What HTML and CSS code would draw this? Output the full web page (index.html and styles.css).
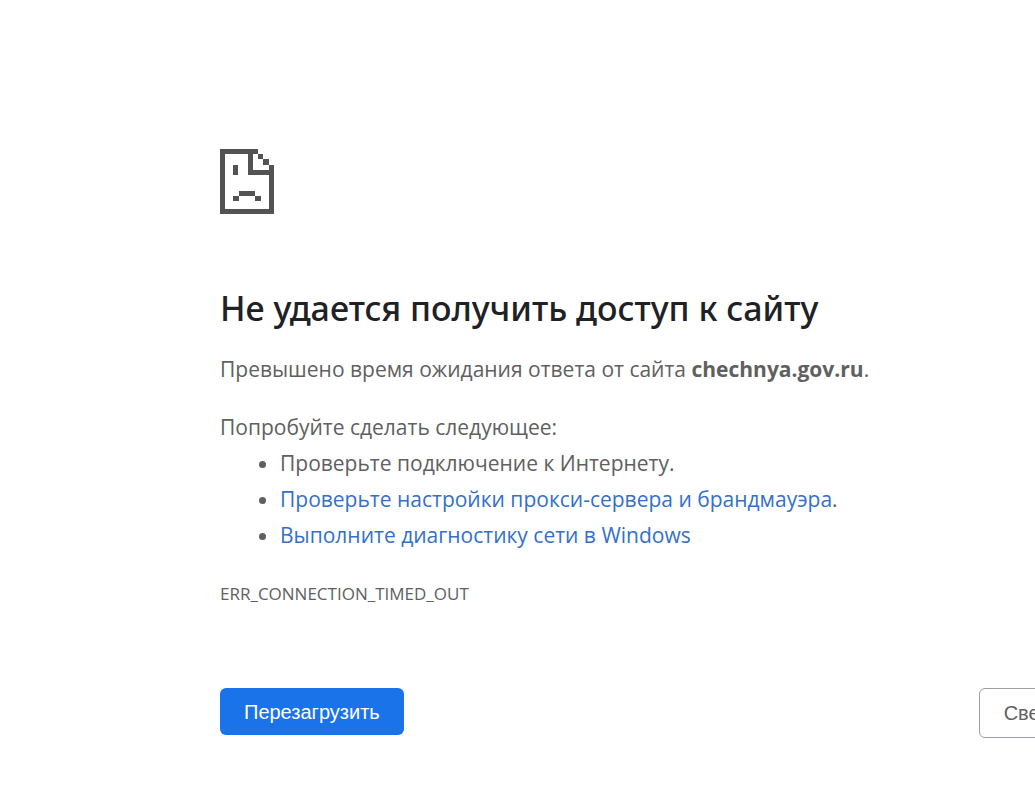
FILE: index.html
```html
<!DOCTYPE html>
<html lang="ru">
<head>
<meta charset="utf-8">
<title>chechnya.gov.ru</title>
<link rel="stylesheet" href="styles.css">
</head>
<body>
<main class="error">
  <svg class="error-icon" viewBox="0 0 54 65" aria-hidden="true">
    <path fill="#535353" d="M0 0H38V5H33V21H49V16H54V65H0ZM5 5V60H49V26H28V5Z" fill-rule="evenodd"/>
    <path fill="#535353" d="M38 5H43V10H38ZM43 10H49V16H43ZM13 16H18V26H13ZM19 42H35V47H19ZM13 47H19V52H13ZM35 47H41V52H35Z"/>
  </svg>
  <h1 class="title">Не удается получить доступ к сайту</h1>
  <p class="summary">Превышено время ожидания ответа от сайта <strong>chechnya.gov.ru</strong>.</p>
  <p class="hint">Попробуйте сделать следующее:</p>
  <ul class="suggestions">
    <li>Проверьте подключение к Интернету.</li>
    <li><a href="#proxy">Проверьте настройки прокси-сервера и брандмауэра</a>.</li>
    <li><a href="#diagnose">Выполните диагностику сети в Windows</a></li>
  </ul>
  <p class="code">ERR_CONNECTION_TIMED_OUT</p>
  <div class="actions">
    <button class="button primary" type="button">Перезагрузить</button>
    <button class="button secondary" type="button">Сведения</button>
  </div>
</main>
</body>
</html>
```
FILE: styles.css
```css
body {
  margin: 0;
  overflow-x: hidden;
  background: #fff;
  color: #606060;
  font: 21px/36px "Open Sans", "Noto Sans", sans-serif;
}
.error {
  min-width: 900px;
  margin-left: 220px;
  padding-top: 149px;
}
.error-icon {
  display: block;
  width: 54px;
  height: 65px;
}
.title {
  margin: 68px 0 0;
  color: #202124;
  font-family: "Noto Sans", sans-serif;
  font-size: 34px;
  font-weight: 500;
  line-height: 52px;
  white-space: nowrap;
}
.summary {
  margin: 17px 0 22px;
}
.hint {
  margin: 0;
}
.suggestions {
  margin: 0;
  padding-left: 60px;
}
.suggestions a {
  color: #3470ca;
  text-decoration: none;
}
.code {
  margin: 29px 0 0;
  font-size: 17px;
  line-height: 24px;
}
.actions {
  display: flex;
  justify-content: space-between;
  align-items: flex-start;
  margin-top: 82px;
}
.button {
  box-sizing: border-box;
  padding: 0 24px;
  border: 0;
  border-radius: 6px;
  font: 20px/24px "Liberation Sans", Arial, sans-serif;
  white-space: nowrap;
}
.primary {
  height: 47px;
  background: #1a73e8;
  color: #fff;
}
.secondary {
  height: 50px;
  border: 1px solid #9aa0a6;
  background: #fff;
  color: #606060;
}
```
